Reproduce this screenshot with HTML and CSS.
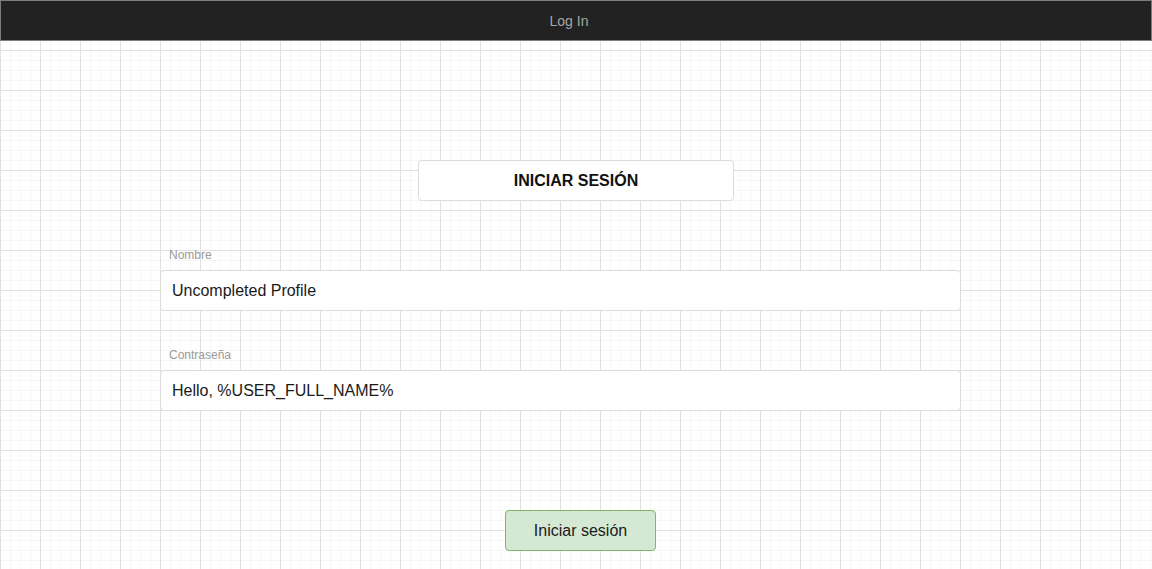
FILE: index.html
```html
<!DOCTYPE html>
<html lang="es">
<head>
<meta charset="utf-8">
<title>Log In</title>
<link rel="stylesheet" href="styles.css">
</head>
<body>
<header class="topbar">Log In</header>
<main class="page">
  <div class="title-box">INICIAR SESIÓN</div>
  <div class="field field-first">
    <div class="label">Nombre</div>
    <div class="input">Uncompleted Profile</div>
  </div>
  <div class="field field-second">
    <div class="label">Contraseña</div>
    <div class="input">Hello, %USER_FULL_NAME%</div>
  </div>
  <button class="submit" type="button">Iniciar sesión</button>
</main>
</body>
</html>
```
FILE: styles.css
```css
html, body {
  margin: 0;
  padding: 0;
}
body {
  width: 1152px;
  height: 569px;
  overflow: hidden;
  font-family: "Liberation Sans", Arial, Helvetica, sans-serif;
  background-color: #ffffff;
  background-image:
    linear-gradient(to right, #e0e0e0 1px, transparent 1px),
    linear-gradient(to bottom, #e0e0e0 1px, transparent 1px),
    linear-gradient(to right, #f6f6f6 1px, transparent 1px),
    linear-gradient(to bottom, #f6f6f6 1px, transparent 1px);
  background-size: 40px 40px, 40px 40px, 10px 10px, 10px 10px;
  background-position: 0 10px, 0 10px, 0 0, 0 0;
}
.topbar {
  box-sizing: border-box;
  height: 41px;
  width: 1152px;
  background: #222222;
  border: 1px solid #7d7d7d;
  color: #a6a6a6;
  font-size: 14px;
  display: flex;
  align-items: center;
  justify-content: center;
  padding-right: 14px;
}
.page {
  display: flex;
  flex-direction: column;
  align-items: flex-start;
}
.title-box {
  box-sizing: border-box;
  margin-top: 119px;
  margin-left: 418px;
  width: 316px;
  height: 41px;
  background: #ffffff;
  border: 1px solid #dcdcdc;
  border-radius: 4px;
  display: flex;
  align-items: center;
  justify-content: center;
  font-weight: bold;
  font-size: 16px;
  color: #111111;
}
.field {
  display: flex;
  flex-direction: column;
  margin-left: 160px;
}
.field-first {
  margin-top: 47px;
}
.field-second {
  margin-top: 37px;
}
.label {
  height: 14px;
  line-height: 14px;
  font-size: 12px;
  color: #999999;
  padding-left: 9px;
  margin-bottom: 8px;
}
.input {
  box-sizing: border-box;
  width: 801px;
  height: 41px;
  background: #ffffff;
  border: 1px solid #dcdcdc;
  border-radius: 4px;
  display: flex;
  align-items: center;
  padding-left: 11px;
  font-size: 16px;
  color: #1a1a1a;
}
.submit {
  box-sizing: border-box;
  margin-top: 99px;
  margin-left: 505px;
  width: 151px;
  height: 41px;
  background: #d5e8d4;
  border: 1px solid #82b366;
  border-radius: 4px;
  font-family: inherit;
  font-size: 16px;
  color: #1a1a1a;
  padding: 0;
}
```
